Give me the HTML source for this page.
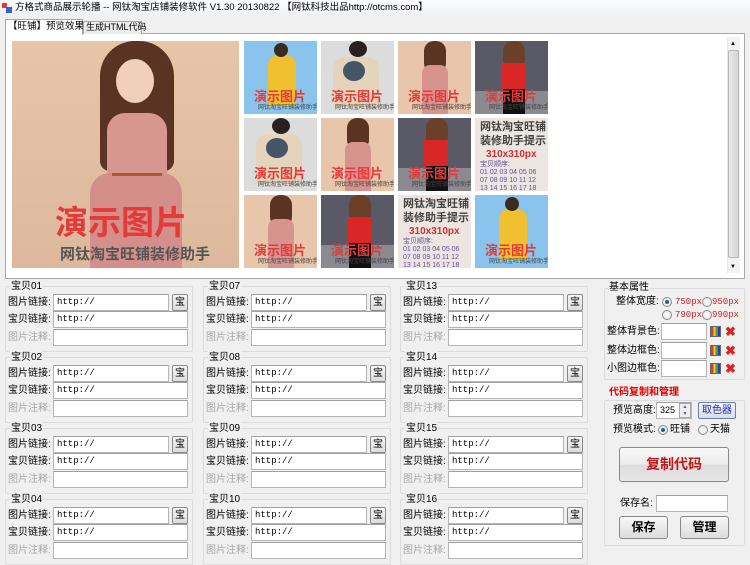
<!DOCTYPE html>
<html><head><meta charset="utf-8">
<style>
*{margin:0;padding:0;box-sizing:border-box}
body{width:750px;height:555px;overflow:hidden;background:#f0f0f0;font-family:"Liberation Sans","Noto Sans CJK SC","WenQuanYi Zen Hei",sans-serif;font-size:10px;color:#000;position:relative}
.a{position:absolute}
.t{position:absolute;white-space:nowrap;line-height:14px;font-size:10px}
.in{position:absolute;background:#fff;border:1px solid #b5b5b5;border-top-color:#a0a0a0;font-family:"Liberation Mono","Noto Sans CJK SC",monospace;font-size:9px;line-height:15px;padding-left:3px;height:17px}
.bt{position:absolute;width:16px;height:17px;border:1px solid #8a8a8a;border-radius:2px;background:linear-gradient(#f6f6f6,#dcdcdc);font-size:10px;line-height:15px;text-align:center}
.g{position:absolute;width:188px;height:66px;border:1px solid #dcdcdc;border-radius:2px}
.gl{position:absolute;left:4px;top:-7px;background:#f0f0f0;padding:0 1px;font-size:10px;line-height:13px}
.tile{position:absolute;width:73px;height:73px;overflow:hidden}
.demo{position:absolute;left:10px;top:48px;color:#e43a3a;font-size:13px;font-weight:bold;white-space:nowrap;line-height:15px}
.sub{position:absolute;left:14px;top:63px;color:#444;font-size:6px;white-space:nowrap;line-height:8px}
.fig{position:absolute}
.rd{position:absolute;width:10px;height:10px;border-radius:50%;border:1px solid #8d8d8d;background:radial-gradient(#fff,#ddd)}
.rd.on::after{content:"";position:absolute;left:2px;top:2px;width:4px;height:4px;border-radius:50%;background:#1e5fa8}
.red{color:#d02020;font-family:"Liberation Mono",monospace;font-size:9px}
.x{position:absolute;color:#e02020;font-weight:bold;font-size:13px;line-height:14px}
.pal{position:absolute;width:11px;height:11px;background:linear-gradient(90deg,#e33 0 25%,#fc3 25% 50%,#3a3 50% 75%,#33c 75%);border:1px solid #666}
</style></head><body>
<div class="a" style="left:0;top:0;width:750px;height:16px;background:linear-gradient(#fdfdfd,#eef0f3)"></div>
<div class="a" style="left:2px;top:3px;width:5px;height:5px;background:#e33"></div>
<div class="a" style="left:6px;top:7px;width:6px;height:6px;background:#36c"></div>
<div class="t" style="left:15px;top:1px;font-size:9.5px">方格式商品展示轮播 -- 网钛淘宝店铺装修软件 V1.30 20130822 【网钛科技出品http://otcms.com】</div>
<div class="a" style="left:5px;top:33px;width:740px;height:246px;border:1px solid #a8a8a8;background:#fff"></div>
<div class="a" style="left:5px;top:19px;width:78px;height:16px;border:1px solid #a8a8a8;border-bottom:none;background:#fff"></div>
<div class="t" style="left:8px;top:20px;font-size:9.5px">【旺铺】预览效果</div>
<div class="a" style="left:83px;top:21px;width:59px;height:13px;border:1px solid #a8a8a8;border-bottom:none;background:#ececec"></div>
<div class="t" style="left:86px;top:20px;font-size:9px">生成HTML代码</div>
<div class="a" style="left:727px;top:37px;width:13px;height:236px;background:#f3f3f3;border-left:1px solid #e6e6e6"></div>
<div class="a" style="left:728px;top:50px;width:11px;height:208px;background:linear-gradient(90deg,#e8e8e8,#d6d6d6);border:1px solid #b5b5b5;border-radius:2px"></div>
<div class="t" style="left:730px;top:37px;font-size:6px">▲</div>
<div class="t" style="left:730px;top:260px;font-size:6px">▼</div>
<div class="a" style="left:12px;top:41px;width:227px;height:227px;background:linear-gradient(#e6c5a8,#ddb89c);overflow:hidden">
 <div class="a" style="left:88px;top:0;width:74px;height:130px;border-radius:35px 35px 10px 10px;background:#5a3322"></div>
 <div class="a" style="left:104px;top:18px;width:38px;height:44px;border-radius:50%;background:#f0d0bb"></div>
 <div class="a" style="left:95px;top:72px;width:60px;height:70px;border-radius:18px 18px 0 0;background:#d89690"></div>
 <div class="a" style="left:78px;top:132px;width:92px;height:100px;border-radius:20px 20px 0 0;background:#d48f8a"></div>
 <div class="a" style="left:100px;top:132px;width:50px;height:3px;background:#a55d2d"></div>
 <div class="t" style="left:43px;top:163px;font-size:33px;line-height:38px;font-weight:bold;color:#e43a3a">演示图片</div>
 <div class="t" style="left:48px;top:205px;font-size:15px;font-weight:bold;color:#555;line-height:18px">网钛淘宝旺铺装修助手</div>
</div>
<div class="tile" style="left:244px;top:41px;background:#8ac4ec"><div class="fig" style="left:24px;top:14px;width:28px;height:50px;border-radius:10px 10px 0 0;background:#f0c030"></div><div class="fig" style="left:30px;top:2px;width:14px;height:14px;border-radius:50%;background:#3a2a20"></div><div class="demo">演示图片</div><div class="sub">网钛淘宝旺铺装修助手</div></div>
<div class="tile" style="left:321px;top:41px;background:#dcdcdc"><div class="fig" style="left:12px;top:16px;width:46px;height:50px;border-radius:12px 12px 0 0;background:#e4d4bc"></div><div class="fig" style="left:22px;top:20px;width:22px;height:20px;background:#456;border-radius:50%"></div><div class="fig" style="left:28px;top:0;width:18px;height:16px;border-radius:50%;background:#2a2020"></div><div class="demo">演示图片</div><div class="sub">网钛淘宝旺铺装修助手</div></div>
<div class="tile" style="left:398px;top:41px;background:#e8c6ab"><div class="fig" style="left:26px;top:0;width:22px;height:32px;border-radius:10px;background:#5a3322"></div><div class="fig" style="left:24px;top:24px;width:26px;height:50px;border-radius:8px 8px 0 0;background:#d7938d"></div><div class="demo">演示图片</div><div class="sub">网钛淘宝旺铺装修助手</div></div>
<div class="tile" style="left:475px;top:41px;background:#5a5a66"><div class="fig" style="left:0;top:50px;width:73px;height:23px;background:#8a8a90"></div><div class="fig" style="left:28px;top:0;width:22px;height:28px;border-radius:10px;background:#6a4028"></div><div class="fig" style="left:26px;top:22px;width:24px;height:28px;background:#d92626"></div><div class="fig" style="left:28px;top:48px;width:22px;height:25px;background:#111"></div><div class="demo">演示图片</div><div class="sub">网钛淘宝旺铺装修助手</div></div>
<div class="tile" style="left:244px;top:118px;background:#dcdcdc"><div class="fig" style="left:12px;top:16px;width:46px;height:50px;border-radius:12px 12px 0 0;background:#e4d4bc"></div><div class="fig" style="left:22px;top:20px;width:22px;height:20px;background:#456;border-radius:50%"></div><div class="fig" style="left:28px;top:0;width:18px;height:16px;border-radius:50%;background:#2a2020"></div><div class="demo">演示图片</div><div class="sub">网钛淘宝旺铺装修助手</div></div>
<div class="tile" style="left:321px;top:118px;background:#e8c6ab"><div class="fig" style="left:26px;top:0;width:22px;height:32px;border-radius:10px;background:#5a3322"></div><div class="fig" style="left:24px;top:24px;width:26px;height:50px;border-radius:8px 8px 0 0;background:#d7938d"></div><div class="demo">演示图片</div><div class="sub">网钛淘宝旺铺装修助手</div></div>
<div class="tile" style="left:398px;top:118px;background:#5a5a66"><div class="fig" style="left:0;top:50px;width:73px;height:23px;background:#8a8a90"></div><div class="fig" style="left:28px;top:0;width:22px;height:28px;border-radius:10px;background:#6a4028"></div><div class="fig" style="left:26px;top:22px;width:24px;height:28px;background:#d92626"></div><div class="fig" style="left:28px;top:48px;width:22px;height:25px;background:#111"></div><div class="demo">演示图片</div><div class="sub">网钛淘宝旺铺装修助手</div></div>
<div class="tile" style="left:475px;top:118px;background:#ede6e0"><div class="t" style="left:5px;top:2px;font-size:11px;color:#444;font-weight:bold">网钛淘宝旺铺</div><div class="t" style="left:5px;top:16px;font-size:11px;color:#444;font-weight:bold">装修助手提示</div><div class="t" style="left:11px;top:30px;font-size:10px;color:#d03030;font-weight:bold">310x310px</div><div class="t" style="left:5px;top:43px;font-size:7px;color:#6050a0;line-height:8px">宝贝顺序:<br>01 02 03 04 05 06<br>07 08 09 10 11 12<br>13 14 15 16 17 18</div></div>
<div class="tile" style="left:244px;top:195px;background:#e8c6ab"><div class="fig" style="left:26px;top:0;width:22px;height:32px;border-radius:10px;background:#5a3322"></div><div class="fig" style="left:24px;top:24px;width:26px;height:50px;border-radius:8px 8px 0 0;background:#d7938d"></div><div class="demo">演示图片</div><div class="sub">网钛淘宝旺铺装修助手</div></div>
<div class="tile" style="left:321px;top:195px;background:#5a5a66"><div class="fig" style="left:0;top:50px;width:73px;height:23px;background:#8a8a90"></div><div class="fig" style="left:28px;top:0;width:22px;height:28px;border-radius:10px;background:#6a4028"></div><div class="fig" style="left:26px;top:22px;width:24px;height:28px;background:#d92626"></div><div class="fig" style="left:28px;top:48px;width:22px;height:25px;background:#111"></div><div class="demo">演示图片</div><div class="sub">网钛淘宝旺铺装修助手</div></div>
<div class="tile" style="left:398px;top:195px;background:#ede6e0"><div class="t" style="left:5px;top:2px;font-size:11px;color:#444;font-weight:bold">网钛淘宝旺铺</div><div class="t" style="left:5px;top:16px;font-size:11px;color:#444;font-weight:bold">装修助手提示</div><div class="t" style="left:11px;top:30px;font-size:10px;color:#d03030;font-weight:bold">310x310px</div><div class="t" style="left:5px;top:43px;font-size:7px;color:#6050a0;line-height:8px">宝贝顺序:<br>01 02 03 04 05 06<br>07 08 09 10 11 12<br>13 14 15 16 17 18</div></div>
<div class="tile" style="left:475px;top:195px;background:#8ac4ec"><div class="fig" style="left:24px;top:14px;width:28px;height:50px;border-radius:10px 10px 0 0;background:#f0c030"></div><div class="fig" style="left:30px;top:2px;width:14px;height:14px;border-radius:50%;background:#3a2a20"></div><div class="demo">演示图片</div><div class="sub">网钛淘宝旺铺装修助手</div></div>

<div class="g" style="left:5px;top:286px"><div class="gl">宝贝01</div></div>
<div class="g" style="left:5px;top:357px"><div class="gl">宝贝02</div></div>
<div class="g" style="left:5px;top:428px"><div class="gl">宝贝03</div></div>
<div class="g" style="left:5px;top:499px"><div class="gl">宝贝04</div></div>
<div class="g" style="left:203px;top:286px"><div class="gl">宝贝07</div></div>
<div class="g" style="left:203px;top:357px"><div class="gl">宝贝08</div></div>
<div class="g" style="left:203px;top:428px"><div class="gl">宝贝09</div></div>
<div class="g" style="left:203px;top:499px"><div class="gl">宝贝10</div></div>
<div class="g" style="left:400px;top:286px"><div class="gl">宝贝13</div></div>
<div class="g" style="left:400px;top:357px"><div class="gl">宝贝14</div></div>
<div class="g" style="left:400px;top:428px"><div class="gl">宝贝15</div></div>
<div class="g" style="left:400px;top:499px"><div class="gl">宝贝16</div></div>

<div class="t" style="left:8px;top:296px">图片链接:</div><div class="in" style="left:53px;top:294px;width:116px">http://</div><div class="bt" style="left:172px;top:294px">宝</div>
<div class="t" style="left:8px;top:313px">宝贝链接:</div><div class="in" style="left:53px;top:311px;width:135px">http://</div>
<div class="t" style="left:8px;top:331px;color:#a8a8a8">图片注释:</div><div class="in" style="left:53px;top:329px;width:135px"></div>
<div class="t" style="left:8px;top:367px">图片链接:</div><div class="in" style="left:53px;top:365px;width:116px">http://</div><div class="bt" style="left:172px;top:365px">宝</div>
<div class="t" style="left:8px;top:384px">宝贝链接:</div><div class="in" style="left:53px;top:382px;width:135px">http://</div>
<div class="t" style="left:8px;top:402px;color:#a8a8a8">图片注释:</div><div class="in" style="left:53px;top:400px;width:135px"></div>
<div class="t" style="left:8px;top:438px">图片链接:</div><div class="in" style="left:53px;top:436px;width:116px">http://</div><div class="bt" style="left:172px;top:436px">宝</div>
<div class="t" style="left:8px;top:455px">宝贝链接:</div><div class="in" style="left:53px;top:453px;width:135px">http://</div>
<div class="t" style="left:8px;top:473px;color:#a8a8a8">图片注释:</div><div class="in" style="left:53px;top:471px;width:135px"></div>
<div class="t" style="left:8px;top:509px">图片链接:</div><div class="in" style="left:53px;top:507px;width:116px">http://</div><div class="bt" style="left:172px;top:507px">宝</div>
<div class="t" style="left:8px;top:526px">宝贝链接:</div><div class="in" style="left:53px;top:524px;width:135px">http://</div>
<div class="t" style="left:8px;top:544px;color:#a8a8a8">图片注释:</div><div class="in" style="left:53px;top:542px;width:135px"></div>

<div class="t" style="left:206px;top:296px">图片链接:</div><div class="in" style="left:251px;top:294px;width:116px">http://</div><div class="bt" style="left:370px;top:294px">宝</div>
<div class="t" style="left:206px;top:313px">宝贝链接:</div><div class="in" style="left:251px;top:311px;width:135px">http://</div>
<div class="t" style="left:206px;top:331px;color:#a8a8a8">图片注释:</div><div class="in" style="left:251px;top:329px;width:135px"></div>
<div class="t" style="left:206px;top:367px">图片链接:</div><div class="in" style="left:251px;top:365px;width:116px">http://</div><div class="bt" style="left:370px;top:365px">宝</div>
<div class="t" style="left:206px;top:384px">宝贝链接:</div><div class="in" style="left:251px;top:382px;width:135px">http://</div>
<div class="t" style="left:206px;top:402px;color:#a8a8a8">图片注释:</div><div class="in" style="left:251px;top:400px;width:135px"></div>
<div class="t" style="left:206px;top:438px">图片链接:</div><div class="in" style="left:251px;top:436px;width:116px">http://</div><div class="bt" style="left:370px;top:436px">宝</div>
<div class="t" style="left:206px;top:455px">宝贝链接:</div><div class="in" style="left:251px;top:453px;width:135px">http://</div>
<div class="t" style="left:206px;top:473px;color:#a8a8a8">图片注释:</div><div class="in" style="left:251px;top:471px;width:135px"></div>
<div class="t" style="left:206px;top:509px">图片链接:</div><div class="in" style="left:251px;top:507px;width:116px">http://</div><div class="bt" style="left:370px;top:507px">宝</div>
<div class="t" style="left:206px;top:526px">宝贝链接:</div><div class="in" style="left:251px;top:524px;width:135px">http://</div>
<div class="t" style="left:206px;top:544px;color:#a8a8a8">图片注释:</div><div class="in" style="left:251px;top:542px;width:135px"></div>

<div class="t" style="left:403px;top:296px">图片链接:</div><div class="in" style="left:448px;top:294px;width:116px">http://</div><div class="bt" style="left:567px;top:294px">宝</div>
<div class="t" style="left:403px;top:313px">宝贝链接:</div><div class="in" style="left:448px;top:311px;width:135px">http://</div>
<div class="t" style="left:403px;top:331px;color:#a8a8a8">图片注释:</div><div class="in" style="left:448px;top:329px;width:135px"></div>
<div class="t" style="left:403px;top:367px">图片链接:</div><div class="in" style="left:448px;top:365px;width:116px">http://</div><div class="bt" style="left:567px;top:365px">宝</div>
<div class="t" style="left:403px;top:384px">宝贝链接:</div><div class="in" style="left:448px;top:382px;width:135px">http://</div>
<div class="t" style="left:403px;top:402px;color:#a8a8a8">图片注释:</div><div class="in" style="left:448px;top:400px;width:135px"></div>
<div class="t" style="left:403px;top:438px">图片链接:</div><div class="in" style="left:448px;top:436px;width:116px">http://</div><div class="bt" style="left:567px;top:436px">宝</div>
<div class="t" style="left:403px;top:455px">宝贝链接:</div><div class="in" style="left:448px;top:453px;width:135px">http://</div>
<div class="t" style="left:403px;top:473px;color:#a8a8a8">图片注释:</div><div class="in" style="left:448px;top:471px;width:135px"></div>
<div class="t" style="left:403px;top:509px">图片链接:</div><div class="in" style="left:448px;top:507px;width:116px">http://</div><div class="bt" style="left:567px;top:507px">宝</div>
<div class="t" style="left:403px;top:526px">宝贝链接:</div><div class="in" style="left:448px;top:524px;width:135px">http://</div>
<div class="t" style="left:403px;top:544px;color:#a8a8a8">图片注释:</div><div class="in" style="left:448px;top:542px;width:135px"></div>

<div class="a" style="left:604px;top:288px;width:141px;height:92px;border:1px solid #dcdcdc;border-radius:2px"></div>
<div class="t" style="left:608px;top:281px;background:#f0f0f0;padding:0 1px">基本属性</div>
<div class="t" style="left:616px;top:295px">整体宽度:</div>
<div class="rd on" style="left:662px;top:297px"></div><div class="t red" style="left:675px;top:295px">750px</div>
<div class="rd" style="left:702px;top:297px"></div><div class="t red" style="left:712px;top:295px">950px</div>
<div class="rd" style="left:662px;top:310px"></div><div class="t red" style="left:675px;top:308px">790px</div>
<div class="rd" style="left:702px;top:310px"></div><div class="t red" style="left:712px;top:308px">990px</div>
<div class="t" style="left:607px;top:325px">整体背景色:</div><div class="in" style="left:661px;top:323px;width:46px"></div><div class="pal" style="left:710px;top:326px"></div><div class="x" style="left:725px;top:325px">✖</div>
<div class="t" style="left:607px;top:344px">整体边框色:</div><div class="in" style="left:661px;top:342px;width:46px"></div><div class="pal" style="left:710px;top:345px"></div><div class="x" style="left:725px;top:344px">✖</div>
<div class="t" style="left:607px;top:362px">小图边框色:</div><div class="in" style="left:661px;top:360px;width:46px"></div><div class="pal" style="left:710px;top:363px"></div><div class="x" style="left:725px;top:362px">✖</div>

<div class="a" style="left:604px;top:400px;width:141px;height:146px;border:1px solid #dcdcdc;border-radius:2px"></div>
<div class="t" style="left:608px;top:386px;background:#f0f0f0;color:#e00000;font-weight:bold;padding:0 1px">代码复制和管理</div>
<div class="t" style="left:613px;top:404px">预览高度:</div>
<div class="in" style="left:656px;top:402px;width:36px;font-family:'Liberation Sans',sans-serif">325</div>
<div class="a" style="left:679px;top:403px;width:12px;height:15px;border:1px solid #aaa;background:#eee;font-size:5px;line-height:7px;text-align:center;color:#557">▲<br>▼</div>
<div class="a" style="left:698px;top:402px;width:38px;height:17px;border:1px solid #6a7fb0;border-radius:2px;background:linear-gradient(#f4f6fb,#d8dde8);color:#2a2ab0;text-align:center;line-height:15px;font-size:10px">取色器</div>
<div class="t" style="left:613px;top:423px">预览模式:</div>
<div class="rd on" style="left:658px;top:425px"></div><div class="t" style="left:670px;top:423px">旺铺</div>
<div class="rd" style="left:698px;top:425px"></div><div class="t" style="left:710px;top:423px">天猫</div>
<div class="a" style="left:619px;top:447px;width:110px;height:35px;border:1px solid #8a8a8a;border-radius:3px;background:linear-gradient(#f8f8f8 0,#ececec 50%,#dcdcdc 51%,#e6e6e6);color:#c01818;font-weight:bold;font-size:14px;text-align:center;line-height:33px">复制代码</div>
<div class="t" style="left:620px;top:497px">保存名:</div>
<div class="in" style="left:656px;top:495px;width:72px"></div>
<div class="a" style="left:619px;top:516px;width:49px;height:23px;border:1px solid #8a8a8a;border-radius:3px;background:linear-gradient(#f8f8f8,#dcdcdc);font-weight:bold;font-size:12px;text-align:center;line-height:21px">保存</div>
<div class="a" style="left:680px;top:516px;width:49px;height:23px;border:1px solid #8a8a8a;border-radius:3px;background:linear-gradient(#f8f8f8,#dcdcdc);font-weight:bold;font-size:12px;text-align:center;line-height:21px">管理</div>
</body></html>
